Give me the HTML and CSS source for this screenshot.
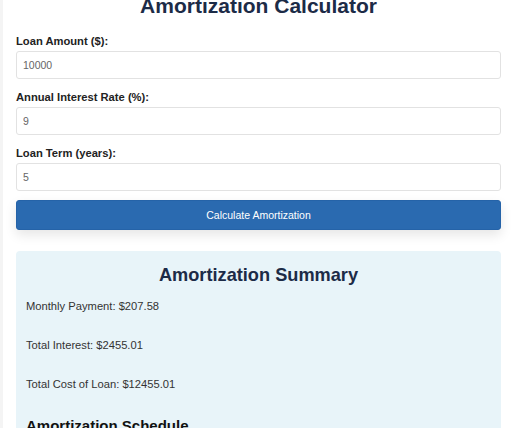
FILE: index.html
```html
<!DOCTYPE html>
<html lang="en">
<head>
    <meta charset="UTF-8">
    <meta name="viewport" content="width=device-width, initial-scale=1.0">
    <title>Amortization Calculator</title>
    <link rel="stylesheet" href="styles.css">
</head>
<body>
    <div class="calculator-container">
        <h1>Amortization Calculator</h1>

        <div class="form-group">
            <label for="loanAmount">Loan Amount ($):</label>
            <input type="number" id="loanAmount" value="10000">
        </div>
        <div class="form-group">
            <label for="interestRate">Annual Interest Rate (%):</label>
            <input type="number" id="interestRate" value="9">
        </div>
        <div class="form-group">
            <label for="loanTerm">Loan Term (years):</label>
            <input type="number" id="loanTerm" value="5">
        </div>
        <button class="calculate-button">Calculate Amortization</button>

        <div class="summary-box" id="summary">
            <h2>Amortization Summary</h2>
            <p>Monthly Payment: $207.58</p>
            <p>Total Interest: $2455.01</p>
            <p>Total Cost of Loan: $12455.01</p>
            <h3>Amortization Schedule</h3>
        </div>
    </div>
</body>
</html>
```

FILE: styles.css
```css
/* General styling */
* {
    box-sizing: border-box;
}

body {
    font-family: "Liberation Sans", Arial, sans-serif;
    background-color: #f4f4f4;
    color: #333;
    margin: 0;
    padding: 0;
    overflow: hidden;
}

.calculator-container {
    width: 509px;
    margin: -26px 0 0 3px;
    padding: 20px 11px 20px 13px;
    background-color: #fff;
    min-height: 480px;
}

h1 {
    text-align: center;
    font-size: 21px;
    line-height: 24px;
    color: #1c2b47;
    margin: 0 0 17px;
}

.form-group {
    margin-bottom: 12px;
}

.form-group label {
    display: block;
    font-size: 11.2px;
    line-height: 13px;
    font-weight: bold;
    color: #222;
    margin-bottom: 3px;
}

.form-group input {
    display: block;
    width: 100%;
    height: 28px;
    padding: 0 6px;
    font-family: "Liberation Sans", Arial, sans-serif;
    font-size: 10.5px;
    color: #666;
    border: 1px solid #e2e2e2;
    border-radius: 3px;
    background-color: #fff;
}

.calculate-button {
    display: block;
    width: 100%;
    height: 30px;
    margin-top: -3px;
    font-family: "Liberation Sans", Arial, sans-serif;
    font-size: 10.5px;
    color: #fff;
    background-color: #2a6ab0;
    border: 1px solid #2563a8;
    border-radius: 3px;
    box-shadow: 0 5px 12px rgba(0, 0, 0, 0.1);
    cursor: pointer;
}

.summary-box {
    margin-top: 21px;
    padding: 14px 10px 10px;
    background-color: #e8f4f9;
    border-radius: 4px;
}

.summary-box h2 {
    text-align: center;
    font-size: 18.2px;
    line-height: 21px;
    color: #1c2b47;
    margin: 0 0 14px;
}

.summary-box p {
    font-size: 11.2px;
    line-height: 13px;
    color: #333;
    margin: 0 0 26px;
}

.summary-box h3 {
    font-size: 15px;
    line-height: 17px;
    color: #111;
    margin: 0;
}
```
